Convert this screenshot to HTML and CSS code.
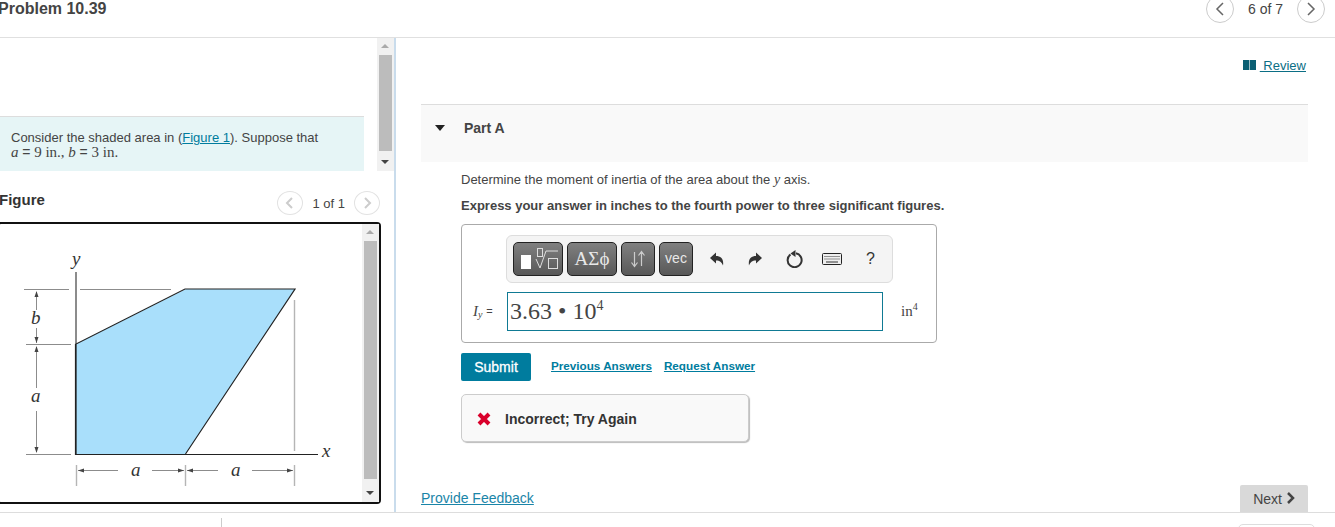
FILE: index.html
```html
<!DOCTYPE html>
<html>
<head>
  <meta charset="UTF-8">
  <title>Problem 10.39</title>
  <link rel="stylesheet" href="styles.css">
</head>
<body>
  <header class="top">
    <h1>Problem 10.39</h1>
    <div class="pager">
      <span class="circle"><svg width="10" height="16" viewBox="0 0 10 16"><path d="M8 2 2 8l6 6" /></svg></span>
      <span class="pager-text">6 of 7</span>
      <span class="circle"><svg width="10" height="16" viewBox="0 0 10 16"><path d="M2 2l6 6-6 6" /></svg></span>
    </div>
  </header>

  <main class="workspace">
    <section class="left">
      <div class="intro">
        <div class="intro-text">
          <p class="statement">Consider the shaded area in (<a href="#">Figure 1</a>). Suppose that<br>
          <span class="math"><i>a</i> <span class="eq">=</span> 9 in., <i>b</i> <span class="eq">=</span> 3 in.</span></p>
        </div>
        <div class="scrollbar">
          <span class="arrow up"></span>
          <div class="thumb thumb-intro"></div>
          <span class="arrow down push"></span>
        </div>
      </div>

      <div class="figure-head">
        <h2>Figure</h2>
        <div class="pager small">
          <span class="circle faded"><svg width="10" height="14" viewBox="0 0 10 14"><path d="M7 2 2 7l5 5" /></svg></span>
          <span class="pager-text">1 of 1</span>
          <span class="circle faded"><svg width="10" height="14" viewBox="0 0 10 14"><path d="M3 2l5 5-5 5" /></svg></span>
        </div>
      </div>

      <div class="figure-frame">
        <svg class="diagram" width="363" height="278" viewBox="-1 224 363 278">
          <polygon points="76,344 186,289 295,289 185.500,454 76,454" fill="#a9dffb" />
          <g fill="none" stroke="#8c8c8c" stroke-width="1">
            <path d="M24 289.500H69M80 289.500H171M26 344.500H71M26 454.500H71" />
            <path d="M36.500 292V310M36.500 328V343M36.500 347V388M36.500 411V452" />
            <path d="M76.500 465V486M185.500 465V486M294.500 300V451M294.500 465V486" stroke="#b5b5b5" stroke-width="1.400" />
            <path d="M78 470.500H118M152 470.500H184M187 470.500H218M252 470.500H293" />
          </g>
          <path d="M76 272V344" stroke="#8c8c8c" stroke-width="2" />
          <path d="M76 454V344L185 289H295L185.500 454" fill="none" stroke="#222" stroke-width="1.200" />
          <path d="M75 454.500H318" stroke="#222" stroke-width="1.200" />
          <path d="M75.500 344V455" stroke="#222" stroke-width="1.200" />
          <g fill="#444">
            <path d="M36.500 291l-2 6h4zM36.500 343l-2-6h4zM36.500 346l-2 6h4zM36.500 453l-2-6h4z" />
            <path d="M78 470.500l6-2v4zM184 470.500l-6-2v4zM187 470.500l6-2v4zM293 470.500l-6-2v4z" />
          </g>
          <g class="labels">
            <text x="72" y="265">y</text>
            <text x="31" y="324">b</text>
            <text x="31" y="402">a</text>
            <text x="131" y="476">a</text>
            <text x="231" y="476">a</text>
            <text x="322" y="457">x</text>
          </g>
        </svg>
        <div class="scrollbar inner">
          <span class="arrow up"></span>
          <div class="thumb thumb-figure"></div>
          <span class="arrow down push"></span>
        </div>
      </div>
    </section>

    <section class="right">
      <div class="review-row">
        <a class="review" href="#"><svg width="13" height="10" viewBox="0 0 13 10"><path d="M0 0h6.200v10H0zM6.800 0H13v10H6.800z" fill="#0b5f73" /></svg><span class="review-link">&nbsp;Review</span></a>
      </div>

      <div class="part-head">
        <span class="caret"></span>
        <span class="part-title">Part A</span>
      </div>

      <div class="part-body">
        <p class="question">Determine the moment of inertia of the area about the <i class="math">y</i> axis.</p>
        <p class="instruction">Express your answer in inches to the fourth power to three significant figures.</p>

        <div class="answer-box">
          <div class="toolbar">
            <span class="tool wide">
              <svg width="48" height="32" viewBox="0 0 48 32">
                <rect x="7" y="12" width="10" height="14" fill="#fff" />
                <g fill="none" stroke="#ddd" stroke-width="1">
                  <rect x="23.500" y="5.500" width="5" height="8" />
                  <path d="M22 16l4 9 6-17h12" />
                  <rect x="34.500" y="15.500" width="9" height="10" />
                </g>
              </svg>
            </span>
            <span class="tool wide greek">ΑΣϕ</span>
            <span class="tool">
              <svg width="32" height="32" viewBox="0 0 32 32">
                <path d="M12.500 9V23M9.500 19.500l3 4 3-4M19.500 23V9M16.500 12.500l3-4 3 4" fill="none" stroke="#ccc" stroke-width="1.200" />
              </svg>
            </span>
            <span class="tool vec">vec</span>
            <span class="actions">
              <svg width="16" height="16" viewBox="0 0 16 16"><path d="M1 7l6-5.500V5c5 0 8 3 7 9.500C12.500 11 11 9.500 7 9.500v3z" fill="#333" /></svg>
              <svg width="16" height="16" viewBox="0 0 16 16"><path d="M15 7L9 1.500V5C4 5 1 8 2 14.500 3.500 11 5 9.500 9 9.500v3z" fill="#333" /></svg>
              <svg width="18" height="18" viewBox="0 0 18 18"><path d="M5.500 4.500A7 7 0 1 0 11 3.300" fill="none" stroke="#333" stroke-width="2" /><path d="M10.500 0v7l-5-3.500z" fill="#333" /></svg>
              <svg class="keyboard" width="20" height="12" viewBox="0 0 20 12"><rect x=".5" y=".5" width="19" height="11" rx="1" fill="#eee" stroke="#222" /><path d="M2.500 3.500h15M2.500 6h15" stroke="#333" stroke-dasharray="1 1" /><path d="M4 9h12" stroke="#333" /></svg>
              <span class="help">?</span>
            </span>
          </div>
          <div class="answer-row">
            <span class="var math"><i>I<sub>y</sub></i> <span class="eq">=</span></span>
            <div class="answer-input">3.63 • 10<sup>4</sup></div>
            <span class="unit math">in<sup>4</sup></span>
          </div>
        </div>

        <div class="submit-row">
          <button type="button" class="submit">Submit</button>
          <a class="small-link" href="#">Previous Answers</a>
          <a class="small-link" href="#">Request Answer</a>
        </div>

        <div class="alert">
          <svg width="14" height="14" viewBox="0 0 14 14"><path d="M2 2l10 10M12 2 2 12" stroke="#d9002b" stroke-width="4" /></svg>
          <span>Incorrect; Try Again</span>
        </div>
      </div>

      <div class="bottom-row">
        <a class="feedback" href="#">Provide Feedback</a>
        <button type="button" class="next">Next <svg width="9" height="12" viewBox="0 0 9 12"><path d="M2 1l5 5-5 5" fill="none" stroke="#444" stroke-width="2.500" /></svg></button>
      </div>
    </section>
  </main>

  <footer class="strip">
    <span class="tick"></span>
    <span class="corner-box"></span>
  </footer>
</body>
</html>
```

FILE: styles.css
```css
/* Reset & basic styling */
* { box-sizing: border-box; }
html, body { height: 527px; overflow: hidden; }
body {
  margin: 0;
  font-family: "Liberation Sans", Arial, sans-serif;
  color: #444;
  background: #fff;
}
p { margin: 0; }
a { color: #007c9e; }
.math { font-family: "Liberation Serif", serif; }
.eq { font-family: "Liberation Sans", Arial, sans-serif; }

/* Top bar */
.top {
  height: 38px;
  border-bottom: 1px solid #e0e0e0;
  display: flex;
  justify-content: space-between;
  align-items: flex-start;
  padding-right: 10px;
}
.top h1 {
  margin: 0 0 0 -2px;
  font-size: 16px;
  line-height: 18px;
  color: #444;
}
.pager { display: flex; align-items: center; height: 18px; }
.pager-text { font-size: 14px; margin: 0 14px; color: #444; }
.circle {
  width: 28px;
  height: 28px;
  border: 1px solid #ccc;
  border-radius: 50%;
  display: flex;
  align-items: center;
  justify-content: center;
  flex: none;
}
.circle svg { fill: none; stroke: #666; stroke-width: 1.500; }
.circle.faded { width: 26px; height: 24px; border-color: #e2e2e2; border-radius: 50%; }
.circle.faded svg { stroke: #ccc; stroke-width: 2; }

.workspace {
  height: 475px;
  border-bottom: 1px solid #ddd;
  display: flex;
}

/* Left column */
.left {
  width: 396px;
  flex: none;
  border-right: 2px solid #c9dcec;
  overflow: hidden;
}
.intro { height: 145px; display: flex; align-items: flex-start; }
.intro-text { width: 377px; padding: 78px 13px 0 0; }
.statement {
  height: 55px;
  background: #e6f5f6;
  border-top: 1px solid #ddd;
  padding: 13px 0 0 11px;
  font-size: 13px;
  line-height: 15px;
}
.statement .math { font-size: 15px; }
.statement .eq { font-size: 14px; }

.scrollbar {
  width: 17px;
  background: #f1f1f1;
  display: flex;
  flex-direction: column;
  align-items: center;
  flex: none;
}
.intro .scrollbar { height: 133px; }
.arrow { width: 100%; height: 17px; flex: none; position: relative; }
.arrow::after {
  content: "";
  position: absolute;
  left: 4px;
  top: 6px;
  border-left: 4px solid transparent;
  border-right: 4px solid transparent;
}
.arrow.up::after { border-bottom: 4px solid #aaa; }
.arrow.down::after { border-top: 4px solid #444; }
.push { margin-top: auto; }
.thumb { width: 13px; background: #bcbcbc; }
.thumb-intro { height: 96px; }
.thumb-figure { height: 238px; }

.figure-head {
  height: 39px;
  width: 380px;
  display: flex;
  justify-content: space-between;
  align-items: center;
  padding-top: 1px;
}
.figure-head h2 {
  margin: 0 0 8px -1px;
  font-size: 15px;
  color: #333;
}
.pager.small .pager-text { font-size: 13px; margin: 0 9px; }
.figure-frame {
  width: 384px;
  height: 282px;
  margin-left: -3px;
  border: 2px solid #111;
  border-radius: 4px;
  display: flex;
  background: #fff;
}
.diagram { flex: none; }
.labels text {
  font-family: "Liberation Serif", serif;
  font-style: italic;
  font-size: 19px;
  fill: #333;
}
.scrollbar.inner { height: 278px; }

/* Right column */
.right {
  flex: 1;
  padding: 0 27px 0 25px;
  display: flex;
  flex-direction: column;
}
.review-row {
  height: 66px;
  padding-top: 20px;
  display: flex;
  justify-content: flex-end;
}
.review {
  display: flex;
  align-items: center;
  height: 14px;
  font-size: 13px;
  color: #0b6e85;
  margin-right: 2px;
  text-decoration: none;
}
.review-link { text-decoration: underline; margin-left: 4px; }
.part-head {
  height: 58px;
  background: #f9f9f9;
  border-top: 1px solid #ddd;
  display: flex;
  align-items: center;
  padding: 0 0 11px 14px;
}
.caret {
  border-left: 5.500px solid transparent;
  border-right: 5.500px solid transparent;
  border-top: 6px solid #222;
  margin-right: 19px;
}
.part-title { font-size: 14px; font-weight: bold; color: #444; }
.part-body { padding: 10px 0 0 40px; }
.question { font-size: 13px; line-height: 16px; }
.question .math { font-size: 14px; }
.instruction { margin-top: 10px; font-size: 13px; line-height: 16px; font-weight: bold; }

.answer-box {
  width: 476px;
  height: 119px;
  margin-top: 10px;
  border: 1px solid #aaa;
  border-radius: 4px;
  padding: 10px 0 0 44px;
}
.toolbar {
  width: 387px;
  height: 48px;
  background: #f4f4f4;
  border: 1px solid #ddd;
  border-radius: 6px;
  display: flex;
  align-items: center;
  gap: 4px;
  padding-left: 6px;
}
.tool {
  width: 34px;
  height: 34px;
  border: 1px solid #222;
  border-radius: 5px;
  background: linear-gradient(#808080, #585858);
  display: flex;
  align-items: center;
  justify-content: center;
  color: #e8e8e8;
  flex: none;
}
.tool.wide { width: 50px; }
.greek { font-family: "Liberation Serif", serif; font-size: 19px; }
.vec { font-size: 14px; padding-bottom: 2px; }
.actions {
  display: flex;
  align-items: center;
  margin-left: 12px;
  gap: 22px;
}
.keyboard { margin-left: -3px; }
.help { font-size: 16px; color: #333; margin-left: 2px; }

.answer-row {
  display: flex;
  align-items: center;
  height: 39px;
  margin: 9px 0 0 -33px;
}
.var { width: 34px; font-size: 15px; white-space: nowrap; color: #444; }
.var sub { font-size: 10px; line-height: 0; vertical-align: -2px; }
.var .eq { font-size: 11px; vertical-align: 1px; }
.answer-input {
  width: 376px;
  height: 39px;
  border: 1px solid #0f7a94;
  padding-left: 2px;
  font-family: "Liberation Serif", serif;
  font-size: 24px;
  line-height: 37px;
  color: #444;
}
.answer-input sup { font-size: 14px; line-height: 0; vertical-align: 9px; }
.unit { margin-left: 18px; font-size: 15px; }
.unit sup { font-size: 10px; line-height: 0; }

.submit-row {
  display: flex;
  align-items: flex-start;
  margin-top: 10px;
}
.submit {
  width: 70px;
  height: 28px;
  border: none;
  border-radius: 2px;
  background: #007c9e;
  color: #fff;
  font-family: inherit;
  font-size: 14px;
  -webkit-text-stroke: 0.300px #fff;
  margin-right: 20px;
}
.small-link {
  font-size: 11.700px;
  font-weight: bold;
  line-height: 26px;
  margin-right: 12px;
}
.alert {
  width: 288px;
  height: 48px;
  margin-top: 13px;
  background: #f9f9f9;
  border: 1px solid #ccc;
  border-radius: 5px;
  box-shadow: 1px 1px 1px #bbb;
  display: flex;
  align-items: center;
  padding: 2px 0 0 15px;
  gap: 14px;
  font-size: 14px;
  font-weight: bold;
  color: #333;
}
.bottom-row {
  margin-top: auto;
  display: flex;
  justify-content: space-between;
  align-items: flex-end;
}
.feedback { font-size: 14px; line-height: 16px; margin-bottom: 6px; color: #1a85a8; }
.next {
  width: 68px;
  height: 27px;
  border: none;
  border-radius: 2px 2px 0 0;
  background: #d9d9d9;
  color: #444;
  font-family: inherit;
  font-size: 14px;
  padding: 0;
}

/* Bottom strip */
.strip { height: 14px; display: flex; overflow: hidden; }
.tick { width: 1px; height: 9px; margin: 5px 0 0 221px; background: #ccc; }
.corner-box {
  width: 77px;
  height: 10px;
  margin: 11px 20px 0 auto;
  border: 1px solid #ddd;
  border-radius: 5px;
}
```
